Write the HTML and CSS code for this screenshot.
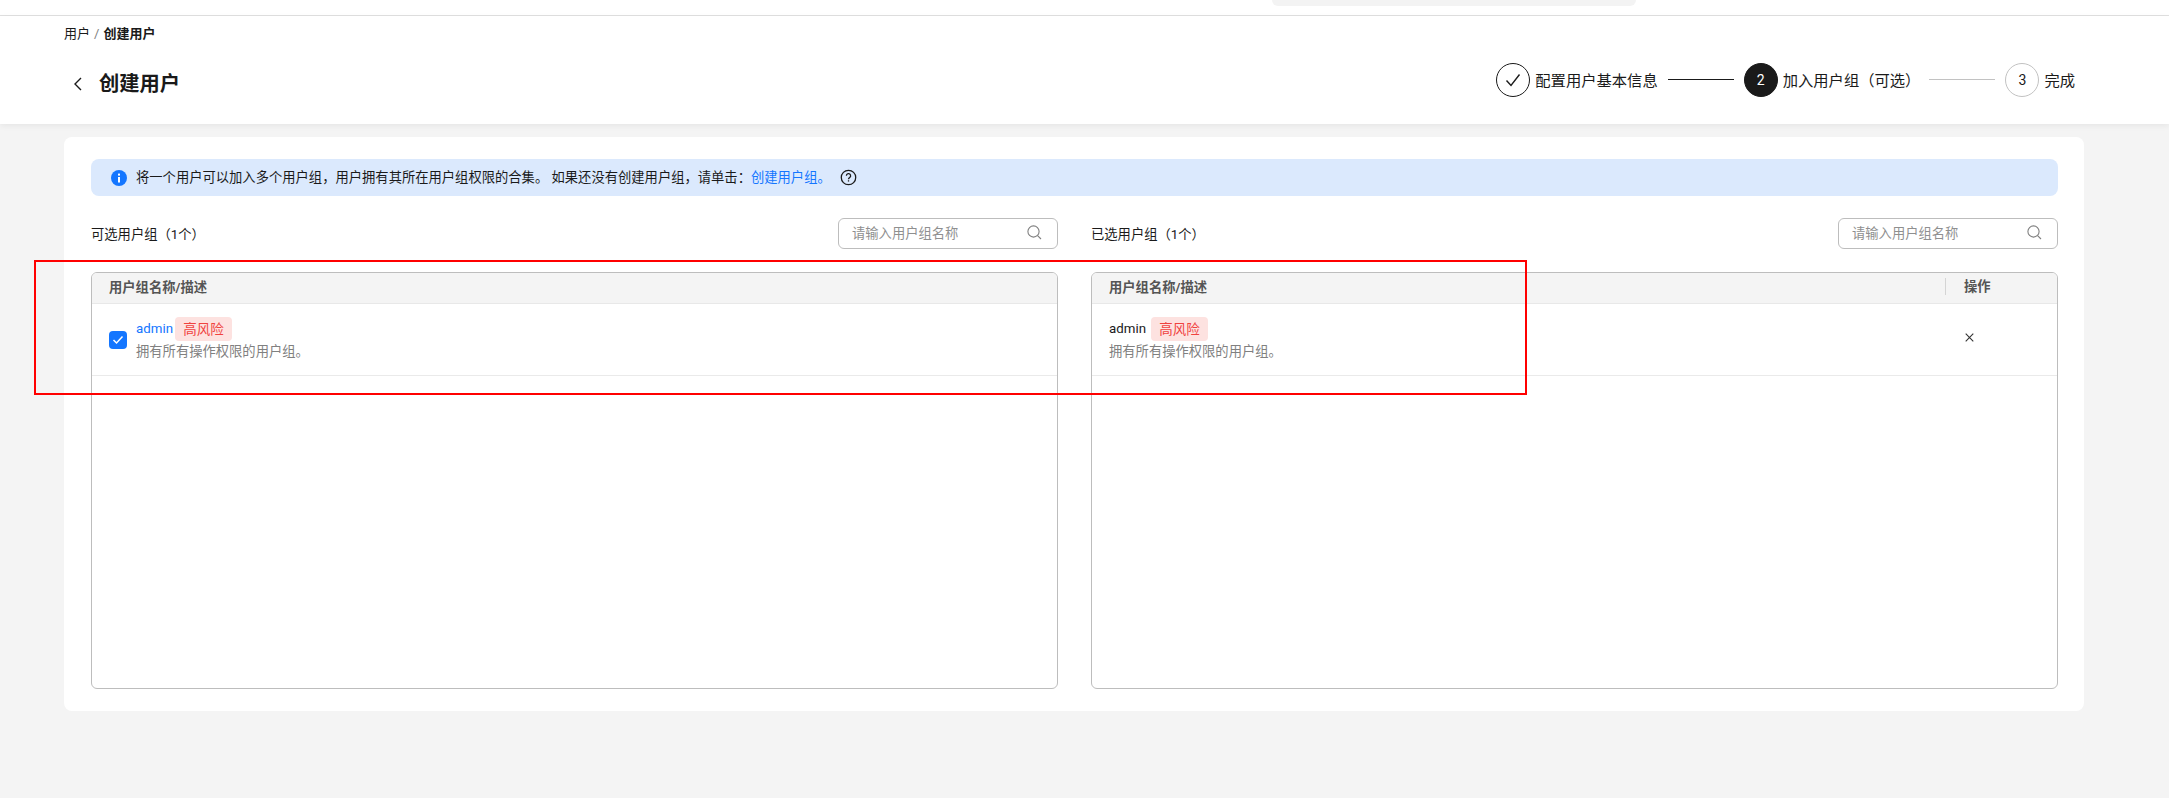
FILE: index.html
```html
<!DOCTYPE html>
<html lang="zh-CN">
<head>
    <meta charset="UTF-8">
    <title>创建用户</title>
    <link rel="stylesheet" href="styles.css">
</head>
<body>

    <!-- top bar -->
    <div class="topbar">
        <div class="top-search"></div>
    </div>

    <!-- page header -->
    <div class="page-header">
        <div class="breadcrumb">用户<span class="crumb-sep">/</span><b>创建用户</b></div>
        <div class="header-main">
            <div class="title-box">
                <svg class="back-icon" width="10" height="14" viewBox="0 0 10 14"><path d="M8 1L2 7l6 6" fill="none" stroke="#1a1a1a" stroke-width="1.4"/></svg>
                <h1>创建用户</h1>
            </div>
            <div class="steps">
                <span class="step-circle done">
                    <svg width="16" height="14" viewBox="0 0 16 14"><path d="M1.5 7.5L6 12.5 14.5 1.5" fill="none" stroke="#1a1a1a" stroke-width="1.4"/></svg>
                </span>
                <span class="step-text">配置用户基本信息</span>
                <span class="step-line"></span>
                <span class="step-circle current">2</span>
                <span class="step-text current-text">加入用户组（可选）</span>
                <span class="step-line gray"></span>
                <span class="step-circle">3</span>
                <span class="step-text">完成</span>
            </div>
        </div>
    </div>

    <div class="card">
        <div class="notice">
            <svg class="info-icon" width="16" height="16" viewBox="0 0 16 16"><circle cx="8" cy="8" r="8" fill="#1476ff"/><rect x="7" y="7" width="2" height="5.5" fill="#fff"/><rect x="7" y="3.6" width="2" height="2" fill="#fff"/></svg>
            <span>将一个用户可以加入多个用户组，用户拥有其所在用户组权限的合集。 如果还没有创建用户组，请单击：</span>
            <a class="link">创建用户组。</a>
            <svg class="help-icon" width="17" height="17" viewBox="0 0 16 16"><circle cx="8" cy="8" r="6.8" fill="none" stroke="#1a1a1a" stroke-width="1.2"/><path d="M6 6.4a2 2 0 1 1 3 1.7c-.7.4-1 .8-1 1.5" fill="none" stroke="#1a1a1a" stroke-width="1.2"/><rect x="7.4" y="10.6" width="1.2" height="1.2" fill="#1a1a1a"/></svg>
        </div>

        <div class="columns">
            <!-- 可选 -->
            <div class="column">
                <div class="column-head">
                    <span>可选用户组（1个）</span>
                    <div class="search-box">
                        <span>请输入用户组名称</span>
                        <svg width="15" height="15" viewBox="0 0 15 15"><circle cx="6.5" cy="6.5" r="5.6" fill="none" stroke="#808080" stroke-width="1.1"/><path d="M10.6 10.6L14 14" stroke="#808080" stroke-width="1.1"/></svg>
                    </div>
                </div>
                <div class="panel">
                    <div class="panel-head">用户组名称/描述</div>
                    <div class="panel-row">
                        <span class="checkbox">
                            <svg width="12" height="10" viewBox="0 0 12 10"><path d="M1.5 5l3 3 6-6.5" fill="none" stroke="#fff" stroke-width="1.5"/></svg>
                        </span>
                        <div class="row-info">
                            <div class="row-name"><a class="link">admin</a><span class="badge">高风险</span></div>
                            <div class="row-desc">拥有所有操作权限的用户组。</div>
                        </div>
                    </div>
                </div>
            </div>

            <!-- 已选 -->
            <div class="column">
                <div class="column-head">
                    <span>已选用户组（1个）</span>
                    <div class="search-box">
                        <span>请输入用户组名称</span>
                        <svg width="15" height="15" viewBox="0 0 15 15"><circle cx="6.5" cy="6.5" r="5.6" fill="none" stroke="#808080" stroke-width="1.1"/><path d="M10.6 10.6L14 14" stroke="#808080" stroke-width="1.1"/></svg>
                    </div>
                </div>
                <div class="panel">
                    <div class="panel-head">
                        <span class="head-name">用户组名称/描述</span>
                        <span class="head-action">操作</span>
                    </div>
                    <div class="panel-row">
                        <div class="row-info">
                            <div class="row-name"><span>admin</span><span class="badge wide">高风险</span></div>
                            <div class="row-desc">拥有所有操作权限的用户组。</div>
                        </div>
                        <svg class="remove-icon" width="9" height="9" viewBox="0 0 9 9"><path d="M.7.7l7.6 7.6M8.3.7L.7 8.3" stroke="#333" stroke-width="1.1"/></svg>
                    </div>
                </div>
            </div>
        </div>
    </div>

    <!-- 截图上的红框标注 -->
    <div class="red-mark"></div>

</body>
</html>
```

FILE: styles.css
```css
body {
    margin: 0;
    height: 798px;
    overflow: hidden;
    background-color: #f4f4f4;
    color: #1a1a1a;
    font-family: Roboto, "Noto Sans CJK SC", sans-serif;
    font-size: 13.3px;
}
/* top bar */
.topbar {
    height: 15px;
    background-color: #fff;
    border-bottom: 1px solid #e0e0e0;
}
.top-search {
    width: 364px;
    height: 6px;
    margin-left: 1272px;
    background-color: #f3f3f3;
    border-radius: 0 0 14px 14px;
}
/* header */
.page-header {
    height: 108px;
    box-sizing: border-box;
    padding: 9px 94px 0 64px;
    background-color: #fff;
    box-shadow: 0 2px 6px rgba(0, 0, 0, 0.06);
}
.breadcrumb {
    line-height: 18px;
    font-size: 13px;
}
.crumb-sep {
    margin: 0 4px;
    color: #808080;
}
.breadcrumb b {
    font-weight: 700;
}
.header-main {
    display: flex;
    justify-content: space-between;
    align-items: flex-start;
    margin-top: 19px;
}
.title-box {
    display: flex;
    align-items: center;
    height: 35px;
    margin-top: 4px;
}
.back-icon {
    margin-left: 9px;
}
h1 {
    margin: 0 0 0 16px;
    font-size: 20.3px;
    font-weight: 700;
    line-height: 28px;
}
/* steps */
.steps {
    display: flex;
    align-items: center;
    height: 35px;
    font-size: 15.3px;
}
.step-circle {
    display: flex;
    align-items: center;
    justify-content: center;
    width: 34px;
    height: 34px;
    box-sizing: border-box;
    border: 1px solid #c2c2c2;
    border-radius: 50%;
    font-size: 14px;
}
.step-circle.done {
    border-color: #1a1a1a;
}
.step-circle.current {
    background-color: #1a1a1a;
    border-color: #1a1a1a;
    color: #fff;
}
.step-text {
    margin-left: 5px;
    padding-bottom: 2px;
}
.step-line {
    width: 66px;
    height: 1px;
    margin: 0 10px;
    background-color: #1a1a1a;
}
.step-line.gray {
    margin-left: 9px;
    background-color: #c2c2c2;
}
/* main card */
.card {
    width: 2020px;
    height: 574px;
    box-sizing: border-box;
    margin: 13px 0 0 64px;
    padding: 22px 26px 0 27px;
    background-color: #fff;
    border-radius: 8px;
}
.notice {
    display: flex;
    align-items: center;
    height: 37px;
    padding-left: 20px;
    background-color: #dbe9fd;
    border-radius: 8px;
}
.notice span,
.notice .link {
    padding-bottom: 2px;
}
.info-icon {
    margin-right: 9px;
}
.link {
    color: #1476ff;
}
.help-icon {
    margin-left: 9px;
}
.columns {
    display: grid;
    grid-template-columns: 967px 967px;
    column-gap: 33px;
    margin-top: 22px;
}
.column-head {
    display: flex;
    justify-content: space-between;
    align-items: center;
    height: 31px;
}
.search-box {
    display: flex;
    justify-content: space-between;
    align-items: center;
    width: 220px;
    height: 31px;
    box-sizing: border-box;
    padding: 0 15px 2px 13px;
    border: 1px solid #bdbdbd;
    border-radius: 6px;
    color: #8f8f8f;
}
.panel {
    height: 417px;
    box-sizing: border-box;
    margin-top: 23px;
    border: 1px solid #bdbdbd;
    border-radius: 6px;
    overflow: hidden;
}
.panel-head {
    display: flex;
    align-items: center;
    height: 31px;
    box-sizing: border-box;
    padding: 0 18px 4px 17px;
    background-color: #f4f4f4;
    border-bottom: 1px solid #e8e8e8;
    color: #555;
    font-weight: 700;
}
.head-name {
    flex: 1;
}
.head-action {
    width: 28px;
    margin-right: 47px;
    padding-left: 18px;
    border-left: 1px solid #d4d4d4;
    line-height: 17px;
    white-space: nowrap;
}
.panel-row {
    display: flex;
    align-items: center;
    height: 71px;
    padding: 0 18px 0 17px;
    border-bottom: 1px solid #eaeaea;
}
.panel-row .remove-icon {
    margin-right: 65px;
    margin-top: -4px;
}
.checkbox {
    display: flex;
    align-items: center;
    justify-content: center;
    width: 18px;
    height: 18px;
    margin-right: 9px;
    background-color: #1476ff;
    border-radius: 4px;
}
.row-info {
    flex: 1;
    margin-top: -2px;
}
.row-name {
    display: flex;
    align-items: center;
    height: 24px;
}
.badge {
    display: inline-block;
    width: 57px;
    margin-left: 2px;
    background-color: #fde2e0;
    border-radius: 4px;
    color: #f0433f;
    font-size: 13.5px;
    line-height: 24px;
    text-align: center;
}
.badge.wide {
    margin-left: 5px;
}
.row-desc {
    margin-top: 2px;
    color: #808080;
    line-height: 18px;
}
/* red annotation on the screenshot */
.red-mark {
    position: absolute;
    left: 34px;
    top: 260px;
    width: 1489px;
    height: 131px;
    border: 2px solid #ff0000;
}
```
